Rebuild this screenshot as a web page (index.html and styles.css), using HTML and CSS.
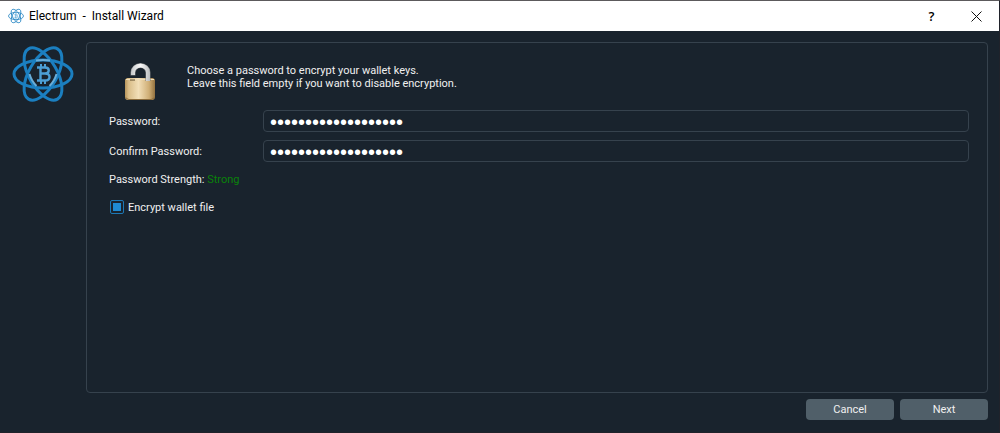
FILE: index.html
```html
<!DOCTYPE html>
<html lang="en">

<head>
    <meta charset="UTF-8">
    <title>Electrum - Install Wizard</title>
    <link rel="stylesheet" href="styles.css">
</head>

<body>
<svg class="defs" aria-hidden="true">
  <symbol id="logo" viewBox="0 0 62 56">
    <g fill="none" stroke="#1b7fc0" stroke-width="3">
      <ellipse cx="31" cy="28" rx="29" ry="14"/>
      <ellipse cx="31" cy="28" rx="29" ry="14" transform="rotate(60 31 28)"/>
      <ellipse cx="31" cy="28" rx="29" ry="14" transform="rotate(120 31 28)"/>
    </g>
    <path d="M24 14.500q7-1.200 14 0M17.500 28q2 7 7 12M44.500 28q-2 7-7 12" fill="none" stroke="#69add8" stroke-width="2"/>
    <g fill="none" stroke="#4c9fd5" stroke-width="2.400">
      <path d="M25 21.500h8c5 0 5 6 0 6h-5M33 27.500c6 0 6 7 0 7h-8M28.500 21v14"/>
      <path d="M29 18v3M33 18v3M29 35v3M33 35v3" stroke-width="2"/>
    </g>
  </symbol>
</svg>

<div class="window">
  <header class="titlebar">
    <svg class="titleIcon"><use href="#logo"/></svg>
    <h1 class="title">Electrum&nbsp; -&nbsp; Install Wizard</h1>
    <button class="titleBtn" aria-label="Help">?</button>
    <button class="titleBtn" aria-label="Close">
      <svg class="closeIcon" viewBox="0 0 11 11"><path d="M.5.5l10 10M10.5.5l-10 10" stroke="#111" fill="none"/></svg>
    </button>
  </header>

  <form class="wizard">
    <div class="main">
      <svg class="logo"><use href="#logo"/></svg>

      <div class="panel">
        <div class="intro">
          <svg class="lock" viewBox="0 0 32 38">
            <defs>
              <linearGradient id="brass">
                <stop offset="0" stop-color="#b6945b"/>
                <stop offset=".12" stop-color="#d9bd88"/>
                <stop offset=".45" stop-color="#f2dfb8"/>
                <stop offset=".8" stop-color="#cfae75"/>
                <stop offset="1" stop-color="#92713f"/>
              </linearGradient>
              <linearGradient id="steel" gradientUnits="userSpaceOnUse" x1="7" y1="0" x2="26" y2="0">
                <stop offset="0" stop-color="#c5c8ca"/>
                <stop offset=".5" stop-color="#fafafa"/>
                <stop offset="1" stop-color="#b9bcbe"/>
              </linearGradient>
            </defs>
            <path d="M1 16.500L3 15h26l2 1.500V34q0 3-3 3H4q-3 0-3-3z" fill="url(#brass)"/>
            <path d="M2 16.500h28" stroke="#efdfbd"/>
            <path d="M6 17h5" stroke="#5d4a2a"/>
            <path d="M2 34.500q1 2 3 2h22q2 0 3-2" fill="none" stroke="#8a6a39"/>
            <path d="M9 12.500V9.500a7.500 7 0 0 1 15 0V18" fill="none" stroke="#75797b" stroke-width="5"/>
            <path d="M9 12V9.500a7.500 7 0 0 1 15 0V18" fill="none" stroke="url(#steel)" stroke-width="4"/>
          </svg>
          <p class="introText">Choose a password to encrypt your wallet keys.<br>Leave this field empty if you want to disable encryption.</p>
        </div>

        <div class="fields">
          <label for="password">Password:</label>
          <input class="field" id="password" type="password" value="correct horse stapl">
          <label for="confirm">Confirm Password:</label>
          <input class="field" id="confirm" type="password" value="correct horse stapl">
        </div>

        <p class="strength">Password Strength: <span class="strong">Strong</span></p>

        <label class="encrypt">
          <input class="check" type="checkbox" checked>
          Encrypt wallet file
        </label>
      </div>
    </div>

    <div class="buttonArea">
      <button class="btn" type="button">Cancel</button>
      <button class="btn" type="button">Next</button>
    </div>
  </form>
</div>
</body>
</html>
```
FILE: styles.css
```css
* {
    box-sizing: border-box;
}

body {
    margin: 0;
    background: #19232d;
    color: #f0f0f0;
    font: 11px/13px Roboto, sans-serif;
}

.defs {
    display: none;
}

.window {
    display: flex;
    flex-direction: column;
    min-height: 100vh;
    border: solid #20222a;
    border-width: 1px 1px 1px 0;
    border-top-color: #5c5a5c;
}

.titlebar {
    display: flex;
    align-items: center;
    height: 30px;
    padding-left: 8px;
    background: #fff;
    color: #000;
}

.titleIcon {
    width: 16px;
    height: 16px;
    margin-right: 5px;
}

.title {
    flex: 1;
    margin: 0;
    font: 12px/16px Roboto, sans-serif;
}

.titleBtn {
    display: flex;
    align-items: center;
    justify-content: center;
    width: 45px;
    height: 30px;
    padding: 0;
    border: none;
    background: none;
    color: #000;
    font: 600 13px/16px "Open Sans", sans-serif;
}

.closeIcon {
    width: 11px;
    height: 11px;
}

.wizard {
    display: flex;
    flex: 1;
    flex-direction: column;
    padding: 11px 11px 12px 12px;
}

.main {
    display: flex;
    flex: 1;
    gap: 12px;
}

.logo {
    flex: none;
    width: 62px;
    height: 64px;
}

.panel {
    flex: 1;
    padding: 20px 18px;
    border: 1px solid #36424d;
    border-radius: 4px;
}

.intro {
    display: flex;
    gap: 31px;
    padding-left: 19px;
}

.lock {
    width: 32px;
    height: 38px;
}

.introText {
    margin: 1px 0 0;
}

.fields {
    display: grid;
    grid-template-columns: 146px 1fr;
    gap: 8px;
    align-items: center;
    margin: 9px 0 11px;
    padding-left: 4px;
}

.field {
    width: 100%;
    height: 22px;
    padding: 2px 6px 0;
    border: 1px solid #36424d;
    border-radius: 4px;
    outline: none;
    background: none;
    color: #fff;
    font: 20px/20px "Liberation Sans", sans-serif;
}

.strength {
    margin: 0 0 14px;
    padding-left: 4px;
}

.strong {
    color: #0a820a;
}

.encrypt {
    display: inline-flex;
    align-items: center;
    gap: 4px;
    padding-left: 5px;
}

.check {
    appearance: none;
    width: 14px;
    height: 14px;
    margin: 0;
    padding: 2px;
    border: 1px solid #1d78b5;
    border-radius: 2px;
    background: #1f8ad2 content-box;
}

.buttonArea {
    display: flex;
    justify-content: flex-end;
    gap: 6px;
    margin-top: 6px;
}

.btn {
    width: 88px;
    height: 21px;
    padding: 0;
    border: none;
    border-radius: 4px;
    background: #505f69;
    color: #f0f0f0;
    font: inherit;
}
```
